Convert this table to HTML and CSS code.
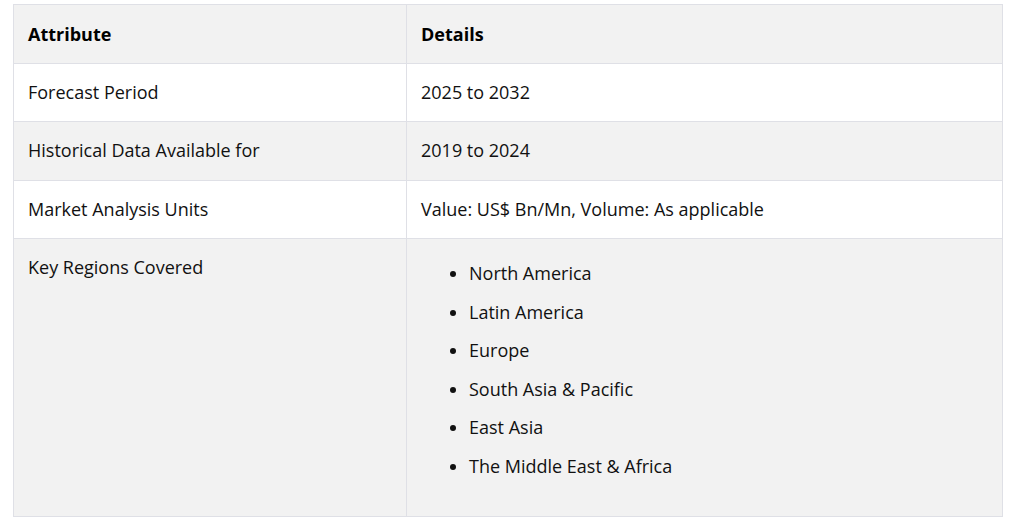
FILE: index.html
```html
<!DOCTYPE html>
<html lang="en">
<head>
    <meta charset="UTF-8">
    <meta name="viewport" content="width=device-width, initial-scale=1.0">
    <title>Report Scope</title>
    <link rel="stylesheet" href="styles.css">
</head>
<body>
    <table class="scope-table">
        <thead>
            <tr>
                <th>Attribute</th>
                <th>Details</th>
            </tr>
        </thead>
        <tbody>
            <tr>
                <td>Forecast Period</td>
                <td>2025 to 2032</td>
            </tr>
            <tr>
                <td>Historical Data Available for</td>
                <td>2019 to 2024</td>
            </tr>
            <tr>
                <td>Market Analysis Units</td>
                <td>Value: US$ Bn/Mn, Volume: As applicable</td>
            </tr>
            <tr>
                <td>Key Regions Covered</td>
                <td>
                    <ul class="regions">
                        <li>North America</li>
                        <li>Latin America</li>
                        <li>Europe</li>
                        <li>South Asia &amp; Pacific</li>
                        <li>East Asia</li>
                        <li>The Middle East &amp; Africa</li>
                    </ul>
                </td>
            </tr>
        </tbody>
    </table>
</body>
</html>
```

FILE: styles.css
```css
body {
    margin: 0;
    padding: 4px 17px 0 13px;
    font-family: "Open Sans", "Noto Sans", sans-serif;
    font-size: 18px;
    color: #111;
    background-color: #fff;
}

.scope-table {
    width: 990px;
    border-collapse: collapse;
    table-layout: fixed;
}

.scope-table th,
.scope-table td {
    border: 1px solid #dfe0e6;
    padding: 15px 14px;
    line-height: 27.5px;
    text-align: left;
    vertical-align: top;
}

.scope-table th {
    padding-top: 16px;
    padding-bottom: 14px;
}

.scope-table th:first-child,
.scope-table td:first-child {
    width: 364px;
}

.scope-table th {
    background-color: #f2f2f2;
    color: #000;
    font-weight: bold;
}

.scope-table tbody tr:nth-child(even) {
    background-color: #f2f2f2;
}

.regions {
    margin: 6px 0 21px;
    padding-left: 48px;
}

.regions li {
    margin-bottom: 11px;
}
```
